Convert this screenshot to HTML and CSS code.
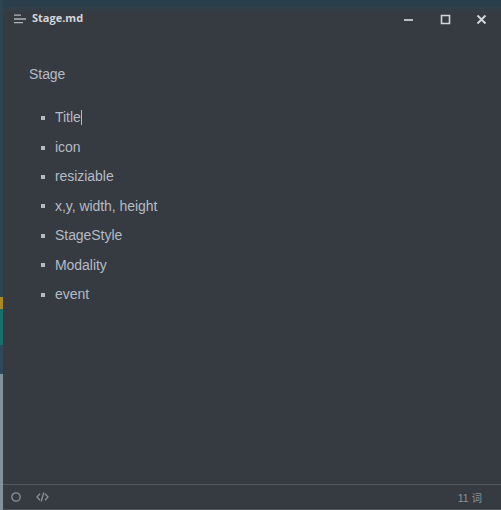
FILE: index.html
```html
<!DOCTYPE html>
<html lang="en">
<head>
<meta charset="utf-8">
<title>Stage.md</title>
<link rel="stylesheet" href="styles.css">
</head>
<body>
<div class="desktop">
  <main class="window">
    <header class="titlebar">
      <svg class="menu" width="12" height="10" viewBox="0 0 12 10" stroke="currentColor" stroke-width="1.3"><path d="M0 1.2h7M0 5h12M0 8.7h9"/></svg>
      <span class="title">Stage.md</span>
      <div class="controls">
        <svg width="11" height="11" viewBox="0 0 11 11" fill="none" stroke="currentColor" stroke-width="1.7"><path d="M1 6h9"/></svg>
        <svg width="11" height="11" viewBox="0 0 11 11" fill="none" stroke="currentColor" stroke-width="1.6"><path d="M1.5 1.5h8v8h-8z"/></svg>
        <svg width="11" height="11" viewBox="0 0 11 11" fill="none" stroke="currentColor" stroke-width="1.9"><path d="M1.5 1.5l8 8M9.5 1.5l-8 8"/></svg>
      </div>
    </header>
    <article class="editor">
      <p class="heading">Stage</p>
      <ul class="list">
        <li><span class="active">Title</span></li>
        <li>icon</li>
        <li>resiziable</li>
        <li>x,y, width, height</li>
        <li>StageStyle</li>
        <li>Modality</li>
        <li>event</li>
      </ul>
    </article>
    <footer class="status">
      <svg width="10" height="10" viewBox="0 0 10 10" fill="none" stroke="currentColor" stroke-width="1.3"><circle cx="5" cy="5" r="4.2"/></svg>
      <svg class="code" width="13" height="10" viewBox="0 0 13 10" fill="none" stroke="currentColor" stroke-width="1.3"><path d="M4 1.7L1 5l3 3.3M9 1.7L12 5 9 8.3M7.8.5L5.2 9.5"/></svg>
      <span class="count">11 词</span>
    </footer>
  </main>
</div>
</body>
</html>
```
FILE: styles.css
```css
body {
  margin: 0;
  font-family: "Liberation Sans", "Noto Sans CJK SC", sans-serif;
}

.desktop {
  box-sizing: border-box;
  height: 510px;
  padding: 7px 0 0 3px;
  overflow: hidden;
  background:
    linear-gradient(#2e4451 0 297px, #a98a21 297px 309px, #166f68 309px 345px, #30465a 345px 374px, #82929b 374px) 0 0 / 3px 100% no-repeat,
    #2a3f4b;
}

.window {
  display: flex;
  flex-direction: column;
  height: 502px;
  background: linear-gradient(#31404a, #363b42 5px);
  border-bottom: 1px solid #50565c;
}

.titlebar {
  display: flex;
  align-items: center;
  height: 22px;
  padding: 0 14px 0 11px;
  color: #d2d5da;
}

.menu {
  margin-top: 1px;
  color: #b0b4ba;
}

.title {
  margin-left: 6px;
  font: bold 11px/22px "Open Sans", sans-serif;
}

.controls {
  display: flex;
  gap: 25.5px;
  margin: 3px 0 0 auto;
}

.editor {
  flex: 1;
  padding: 34px 26px 0;
  font-size: 14px;
  line-height: 22px;
  letter-spacing: -0.05px;
  color: #b5bac4;
}

.heading {
  margin: 0;
}

.list {
  margin: 18px 0 0;
  padding: 0;
  list-style: none;
}

.list li {
  display: flex;
  align-items: center;
  height: 29.4px;
}

.list li::before {
  content: "";
  width: 4px;
  height: 4px;
  margin: 1px 10px 0 12px;
  background: #b5bac4;
}

.active {
  line-height: 15px;
  border-right: 1px solid #b5bac4;
}

.status {
  display: flex;
  align-items: center;
  height: 24px;
  padding: 0 19px 0 8px;
  border-top: 1px solid #555a60;
  color: #8b9097;
  font-size: 11px;
}

.code {
  margin-left: 15px;
}

.count {
  margin-left: auto;
  font-size: 10.5px;
}
```
